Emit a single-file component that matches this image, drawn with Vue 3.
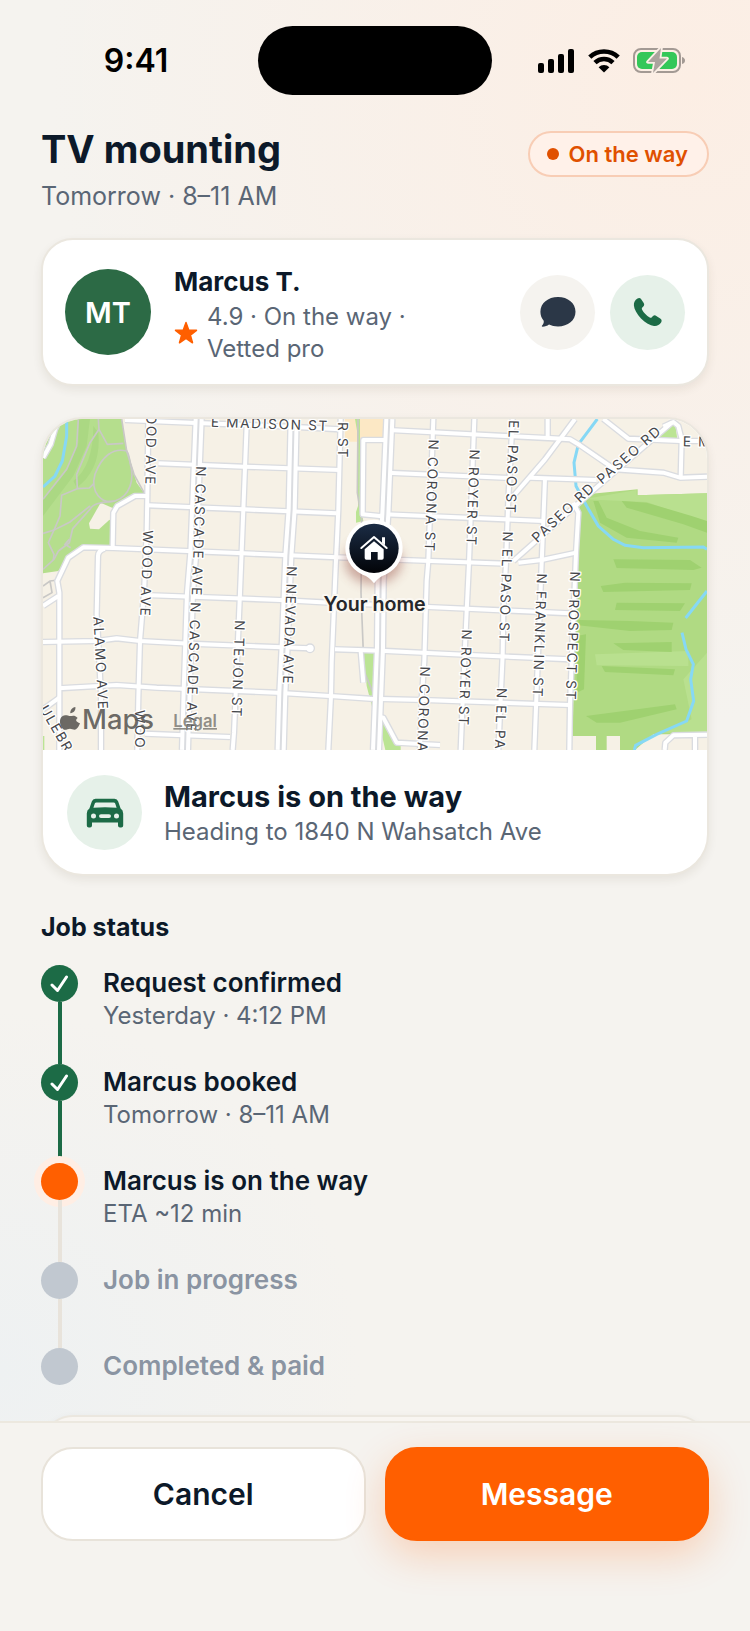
<script setup>
const parkPaths = [
  'M145 39 L140 120 L110 190 L39 280',
  'M205 39 L207 70 L232 115 L280 112',
  'M207 70 L180 110 L140 205 L142 248 L95 268 L90 330 L72 372 L39 382',
  'M142 248 L178 246 L192 232',
  'M290 135 C250 125 215 150 195 205 C180 260 215 295 255 285 C300 270 315 220 300 170 C298 150 295 142 290 135',
  'M255 285 C215 290 190 290 180 310 L128 368 L118 410 L85 435 L72 460 L39 490',
  'M180 300 L120 348 L72 372 L55 410 L72 445 L70 462',
  'M275 39 L290 135 L312 205 L345 265',
  'M118 400 L105 415 L122 425',
  'M39 540 L60 525 L85 522 M60 525 L66 560 L39 575'
]

const roads = [
  'M285 42 L480 50 L780 62 L930 70',
  'M385 172 L640 182 L930 192',
  'M352 298 L640 310 L920 322',
  'M88 1032 L88 560 L82 525 L115 455 L160 424 L250 426 L640 442 L920 454 L1120 462 L1430 473',
  'M355 39 L352 270 L350 380 L342 560 L330 705 L325 875 L322 1032',
  'M352 270 L315 270 L262 300 L250 320 L248 424',
  'M225 428 Q205 432 204 450 L200 625 L205 705 L213 870 L213 1032',
  'M342 567 L750 582 L900 590 L1195 603 L1620 622',
  'M39 708 L200 705 L260 697 L330 705 L480 713 L840 727',
  'M915 730 L1050 734 L1320 747 L1620 760',
  'M85 847 L260 837 L380 845 L740 860 L900 870 L1020 878 L1180 882 L1620 897',
  'M345 983 L600 993',
  'M650 58 L640 310 L630 560 L612 980 L608 1032',
  'M932 39 L925 310 L915 530 L905 770 L903 870 L895 1032',
  'M1065 102 L1000 102 L998 325 L1050 330 L1065 325 L1540 345',
  'M992 735 L1000 830',
  'M1035 930 L1060 935 L1100 1010 L1230 1017',
  'M1210 39 L1195 465 L1190 525 L1183 765 L1175 880 L1170 1032',
  'M1333 39 L1317 470 L1310 615 L1303 765 L1292 1032',
  'M1448 39 L1435 280 L1428 470 L1420 620 L1418 745 L1405 1032',
  'M1545 218 L1535 470 L1525 725 L1513 1032',
  'M1553 39 L1553 92',
  'M1618 1032 L1620 895 L1638 440 L1645 320 L1630 290',
  'M1075 72 L1570 97 L1620 100 L1650 118 L1755 190 L1900 200 L1950 215 L2031 212',
  'M1070 200 L1440 216 M1500 215 L1700 222',
  'M1635 39 L1545 160 L1450 270',
  'M1925 50 L1670 270 L1450 465',
  'M1900 62 L1930 48 L1945 60 L1955 100 L1952 215',
  'M1720 39 L1795 98 L1950 105 L2031 105',
  'M1465 470 L1535 462 L1638 440',
  'M88 875 L39 910 M39 600 L85 570',
  'M39 155 L62 115 L75 70 L90 39',
  'M2031 986 L1930 988 L1906 1010 L1904 1032 M1995 988 L1995 1032'
]

const avenues = [
  'M506 39 L490 440 L480 560 L470 855 L465 1032',
  'M791 39 L785 310 L775 450 L765 700 L757 860 L752 1032',
  'M1078 39 L1066 325 L1052 525 L1050 725 L1038 1032'
]

const fairways = [
  'M1775 285 L1850 290 L1985 330 L2031 345 L2031 380 L1960 355 L1790 305 Z',
  'M1690 285 L1705 285 L1730 335 L1830 375 L1945 395 L1940 410 L1790 395 L1710 350 Z',
  'M1750 460 L1980 462 L2015 485 L1990 492 L1760 486 Z',
  'M1712 540 L1785 530 L1985 532 L1980 552 L1720 558 Z',
  'M1760 590 L1965 592 L1950 615 L1755 612 Z',
  'M1645 642 L1800 645 L1930 650 L1925 672 L1800 675 L1645 658 Z',
  'M1750 712 L1925 708 L1925 738 L1780 732 Z',
  'M1715 780 L1935 790 L1930 808 L1725 798 Z',
  'M1640 690 L1668 685 L1662 850 L1640 860 Z',
  'M1668 930 L1935 895 L1940 910 L1770 950 L1700 950 Z'
]

const labels = [
  { text: 'OOD AVE', x: 346, y: 240, turn: 91, anchor: 'end' },
  { text: 'N CASCADE AVE', x: 499, y: 180, turn: 92 },
  { text: 'WOOD AVE', x: 340, y: 372, turn: 92 },
  { text: 'N NEVADA AVE', x: 771, y: 480, turn: 92 },
  { text: 'N CASCADE AVE', x: 482, y: 588, turn: 92 },
  { text: 'ALAMO AVE', x: 190, y: 632, turn: 87 },
  { text: 'N TEJON ST', x: 615, y: 642, turn: 92 },
  { text: 'WOO', x: 315, y: 912, turn: 90 },
  { text: 'ULEBR', x: 28, y: 908, turn: 60 },
  { text: 'E MADISON ST', x: 542, y: 62, turn: 2 },
  { text: 'R ST', x: 924, y: 48, turn: 90 },
  { text: 'N CORONA ST', x: 1196, y: 100, turn: 92 },
  { text: 'N ROYER ST', x: 1319, y: 130, turn: 92 },
  { text: 'EL PASO ST', x: 1437, y: 42, turn: 92 },
  { text: 'N EL PASO ST', x: 1419, y: 376, turn: 92 },
  { text: 'PASEO RD', x: 1522, y: 412, turn: -43 },
  { text: 'PASEO RD', x: 1716, y: 236, turn: -41 },
  { text: 'E M', x: 1958, y: 121, turn: 1 },
  { text: 'N FRANKLIN ST', x: 1521, y: 502, turn: 92 },
  { text: 'N PROSPECT ST', x: 1621, y: 496, turn: 92 },
  { text: 'N ROYER ST', x: 1296, y: 670, turn: 92 },
  { text: 'N CORONA', x: 1171, y: 781, turn: 92 },
  { text: 'N EL PA', x: 1401, y: 845, turn: 92 }
]

const steps = [
  { title: 'Request confirmed', note: 'Yesterday · 4:12 PM', state: 'done' },
  { title: 'Marcus booked', note: 'Tomorrow · 8–11 AM', state: 'done' },
  { title: 'Marcus is on the way', note: 'ETA ~12 min', state: 'active' },
  { title: 'Job in progress', note: '', state: 'todo' },
  { title: 'Completed & paid', note: '', state: 'todo' }
]
</script>

<template>
  <div class="screen">
    <div class="content">
      <div class="status-bar">
        <span class="time">9:41</span>
        <span class="island"></span>
        <span class="indicators">
          <svg width="37" height="24" viewBox="0 0 37 24">
            <rect x="0" y="14" width="6" height="10" rx="2" />
            <rect x="10" y="10" width="6" height="14" rx="2" />
            <rect x="20" y="5" width="6" height="19" rx="2" />
            <rect x="30" y="0" width="6" height="24" rx="2" />
          </svg>
          <svg width="32" height="24" viewBox="0 0 32 24">
            <g fill="none" stroke="#000" stroke-width="4.6">
              <path d="M1.8 8.2 A20.5 20.5 0 0 1 30.2 8.2" />
              <path d="M7 13.6 A13 13 0 0 1 25 13.6" />
            </g>
            <path d="M16 23.5 L10.6 18.2 A7.6 7.6 0 0 1 21.4 18.2 Z" />
          </svg>
          <svg width="52" height="26" viewBox="0 0 52 26">
            <rect x="1" y="1" width="46" height="23" rx="7" fill="none" stroke="#a39a94" stroke-width="2" />
            <path d="M49 9 Q52 10 52 12.500 Q52 15 49 16 Z" fill="#a39a94" />
            <rect x="4" y="4" width="40" height="17" rx="5" fill="#34c759" />
            <path d="M28 0 L15 14 H22 L20 25 L34 10.500 H26.500 Z" fill="#aba39e" stroke="#fbefe6" stroke-width="3.600" paint-order="stroke" stroke-linejoin="round" />
          </svg>
        </span>
      </div>

      <main class="main">
        <header class="heading">
          <div>
            <h1>TV mounting</h1>
            <p>Tomorrow · 8–11 AM</p>
          </div>
          <span class="badge"><i></i>On the way</span>
        </header>

        <section class="card pro">
          <span class="avatar">MT</span>
          <div class="pro-text">
            <h2>Marcus T.</h2>
            <div class="meta">
              <svg width="24" height="24" viewBox="0 0 24 24">
                <path d="M12 1.500 L14.700 9 L22.500 9.300 L16.400 14.100 L18.500 21.800 L12 17.400 L5.500 21.800 L7.600 14.100 L1.500 9.300 L9.300 9 Z" fill="#ff5f00" stroke="#ff5f00" stroke-width="1.500" stroke-linejoin="round" />
              </svg>
              <p>4.9 · On the way ·<br />Vetted pro</p>
            </div>
          </div>
          <button class="round neutral" type="button" aria-label="Message Marcus">
            <svg width="36" height="30" viewBox="0 0 36 30">
              <path d="M18 0 C28 0 35.500 6.200 35.500 14.700 C35.500 23.200 28 29.400 18 29.400 C14.600 29.400 11.600 28.800 9 27.500 C7.300 28.900 5 29.700 2.600 29.700 C1.600 29.700 1.600 28.900 2.300 28.200 C3.600 26.900 4 25.300 3.700 23.700 C1.600 21.300 0.400 18.200 0.400 14.700 C0.400 6.200 8 0 18 0 Z" fill="#2b3747" />
            </svg>
          </button>
          <button class="round mint" type="button" aria-label="Call Marcus">
            <svg width="30" height="30" viewBox="0 0 30 30">
              <path d="M4.500 1.600 C6 0.600 7.300 1 8.200 2.300 L10.700 6 C11.500 7.300 11.300 8.400 10.300 9.500 L9.300 10.600 C8.700 11.300 8.700 11.900 9.100 12.700 C10.600 15.500 13.700 18.700 16.700 20.500 C17.500 21 18.200 20.900 18.800 20.300 L20 19.100 C21 18.200 22.100 18.100 23.300 18.900 L27.200 21.600 C28.700 22.600 29.100 24 28.100 25.500 C26.400 28.100 24 29.200 21 28.900 C17.300 28.500 12.400 25.800 8 21.400 C3.700 17 1.200 12.200 0.900 8.600 C0.700 5.600 1.900 3.200 4.500 1.600 Z" fill="#1c6b46" />
            </svg>
          </button>
        </section>

        <section class="card trip">
          <svg class="map" viewBox="39 39 1992 993" role="img" aria-label="Map around your home">
            <defs>
              <linearGradient id="pin" x1="0" y1="0" x2="0" y2="1">
                <stop offset="0" stop-color="#1b2c45" />
                <stop offset="1" stop-color="#020408" />
              </linearGradient>
              <filter id="soft" x="-50%" y="-50%" width="200%" height="200%">
                <feGaussianBlur stdDeviation="16" />
              </filter>
            </defs>
            <rect x="39" y="39" width="1992" height="993" fill="#f6f1e6" />
            <path d="M39 39 H275 L285 110 L320 230 L345 265 L310 270 L262 300 L248 330 V424 H155 L115 455 L85 495 L39 502 Z" fill="#b5de8d" />
            <path d="M39 280 L110 190 L145 110 L145 39 H180 L170 120 L130 210 L39 330 Z M130 225 Q190 180 190 60 L205 80 Q215 190 140 245 Z" fill="#abd883" />
            <path d="M212 290 L248 306 L240 340 L207 370 L180 368 L177 352 Z" fill="#f6f1e6" />
            <path d="M945 39 H1062 V107 H945 Z" fill="#fce8c5" />
            <path d="M975 39 H990 V290 L1000 345 L978 350 V318 L984 300 L982 80 Z M1000 740 H1040 V880 L1028 910 L1010 840 Z M1050 940 L1062 945 L1112 1020 V1032 H1066 L1054 980 Z M39 990 H43 V1032 H39 Z M1890 75 L1935 50 L1942 100 H1890 Z" fill="#bbe494" />
            <path d="M1640 310 L1670 265 L1823 250 V268 L2031 262 V985 H1930 L1870 985 L1815 1032 H1770 V990 H1730 V1032 H1698 V990 H1628 Z" fill="#b0da83" />
            <path d="M1660 280 L1820 252 V268 L2031 262 V350 L1850 288 Z M1695 745 L1975 735 L1975 780 L1700 778 Z M1960 820 L2031 740 V980 H1900 L1985 940 Z" fill="#b9e08f" />
            <path v-for="d in fairways" :key="d" :d="d" fill="#9fd170" />
            <g fill="none" stroke="#c9c8c6" stroke-width="5">
              <path v-for="d in parkPaths" :key="d" :d="d" />
              <path d="M984 39 L982 260 L995 340 L993 560 L1000 740 L1004 800 L1030 862" />
            </g>
            <g fill="none" stroke="#86d8f5" stroke-width="9">
              <path d="M110 39 V90 L97 165 L75 210 L39 243" />
              <path d="M1702 39 L1645 115 L1632 170 L1638 240 L1670 300 L1705 360 L1750 400 L1785 418 L1840 425 L2020 423 L2031 430" />
              <path d="M2031 555 L1967 636 M1956 680 L1968 730 L1990 775 L1982 820 L1991 885 L1970 945 L1880 985 L1817 1018 L1813 1032" />
            </g>
            <g class="casing">
              <path v-for="d in roads" :key="d" :d="d" />
            </g>
            <circle cx="840" cy="727" r="15" fill="#d9dbdf" />
            <g class="avenue-casing">
              <path v-for="d in avenues" :key="d" :d="d" />
            </g>
            <g class="road">
              <path v-for="d in roads" :key="d" :d="d" />
            </g>
            <circle cx="840" cy="727" r="11" fill="#fff" />
            <g class="avenue">
              <path v-for="d in avenues" :key="d" :d="d" />
            </g>
            <g class="median">
              <path v-for="d in avenues" :key="d" :d="d" />
            </g>
            <g class="street">
              <text v-for="(l, i) in labels" :key="i" :text-anchor="l.anchor || 'start'" :transform="`translate(${l.x} ${l.y}) rotate(${l.turn})`">{{ l.text }}</text>
            </g>
            <g fill="#5f5d59" fill-opacity=".92">
              <path d="M136 903 C126 904 120 914 121 922 C131 921 138 912 136 903 Z M143 936 C135 926 126 930 121 930 C115 930 105 925 98 930 C84 938 90 965 102 971 C108 973 114 968 120 968 C126 968 132 973 138 970 C144 966 148 958 150 952 C138 947 135 942 143 936 Z" />
              <text class="maps-word" x="156" y="970">Maps</text>
              <a href="#legal"><text class="legal" x="430" y="963">Legal</text></a>
            </g>
            <ellipse cx="1030" cy="465" rx="86" ry="70" fill="#8a3a30" opacity=".4" filter="url(#soft)" />
            <path d="M1032 341 A86 86 0 0 1 1066 506 Q1046 512 1032 532 Q1018 512 998 506 A86 86 0 0 1 1032 341 Z" fill="#fff" />
            <circle cx="1032" cy="427" r="74" fill="url(#pin)" />
            <path d="M994 426 L1032 393 L1070 426" fill="none" stroke="#fff" stroke-width="6" stroke-linecap="round" stroke-linejoin="round" />
            <path d="M1056 394 H1065 V418 L1056 410 Z" fill="#fff" />
            <path d="M1004 430 L1032 406 L1061 430 V456 Q1061 461 1056 461 H1043 V438 H1023 V461 H1009 Q1004 461 1004 456 Z" fill="#fff" />
            <text class="home" x="1034" y="615" text-anchor="middle">Your home</text>
          </svg>
          <div class="trip-info">
            <span class="round mint">
              <svg width="38" height="30" viewBox="0 0 38 30">
                <path fill-rule="evenodd" fill="#1c6b46" d="M9.500 0.800 H28.500 Q31.300 0.800 32.200 3.400 L34.600 10.600 Q37.200 12 37.200 15.500 V27.500 Q37.200 29.500 35.200 29.500 H34 Q32 29.500 32 27.500 V24.600 H6 V27.500 Q6 29.500 4 29.500 H2.800 Q0.800 29.500 0.800 27.500 V15.500 Q0.800 12 3.400 10.600 L5.800 3.400 Q6.700 0.800 9.500 0.800 Z M10.400 4.400 Q9.200 4.400 8.800 5.600 L7.400 9.800 Q19 8.600 30.600 9.800 L29.200 5.600 Q28.800 4.400 27.600 4.400 Z M7.500 15.600 A2.500 2.500 0 1 0 7.500 20.600 A2.500 2.500 0 1 0 7.500 15.600 Z M30.500 15.600 A2.500 2.500 0 1 0 30.500 20.600 A2.500 2.500 0 1 0 30.500 15.600 Z M15 16.200 H23 Q25 16.200 25 18.100 Q25 20 23 20 H15 Q13 20 13 18.100 Q13 16.200 15 16.200 Z" />
              </svg>
            </span>
            <div>
              <h2>Marcus is on the way</h2>
              <p>Heading to 1840 N Wahsatch Ave</p>
            </div>
          </div>
        </section>

        <h3 class="section-title">Job status</h3>
        <ol class="timeline">
          <li v-for="s in steps" :key="s.title" :class="s.state">
            <span class="dot">
              <svg v-if="s.state === 'done'" width="19" height="18" viewBox="0 0 19 18">
                <path d="M2 10 L7.500 15.500 L16.500 2" fill="none" stroke="#fff" stroke-width="3" stroke-linecap="round" stroke-linejoin="round" />
              </svg>
            </span>
            <div>
              <h4>{{ s.title }}</h4>
              <p v-if="s.note">{{ s.note }}</p>
            </div>
          </li>
        </ol>
        <section class="card next"></section>
      </main>
    </div>

    <footer class="actions">
      <button class="cancel" type="button">Cancel</button>
      <button class="primary" type="button">Message</button>
    </footer>
  </div>
</template>

<style>
body {
  margin: 0;
}
</style>

<style scoped>
.screen {
  height: 100vh;
  display: flex;
  flex-direction: column;
  font-family: Inter, "Liberation Sans", sans-serif;
  color: #0c1929;
  background:
    radial-gradient(circle at 92% 5%, #fceee4 0, rgba(252, 238, 228, 0) 640px),
    radial-gradient(circle at 0 84%, #eef1f2 0, rgba(238, 241, 242, 0) 360px),
    #f5f3ef;
}
h1, h2, h3, h4, p, ol {
  margin: 0;
  padding: 0;
}
svg {
  display: block;
  flex: none;
}
.content {
  flex: 1;
  min-height: 0;
  overflow-y: auto;
  scrollbar-width: none;
}
.status-bar {
  display: grid;
  grid-template-columns: 1fr 234px 1fr;
  align-items: center;
  padding-top: 26px;
}
.time {
  font-size: 32px;
  font-weight: 600;
  text-align: center;
  color: #000;
  padding-left: 14px;
}
.island {
  height: 69px;
  border-radius: 35px;
  background: #000;
}
.indicators {
  display: flex;
  justify-content: center;
  align-items: center;
  gap: 13px;
  padding-right: 20px;
}
.main {
  padding: 28px 41px 0;
}
.heading {
  display: flex;
  justify-content: space-between;
  align-items: flex-start;
}
h1 {
  font-size: 38px;
  line-height: 52px;
  font-weight: 700;
}
p {
  font-size: 24px;
  line-height: 32px;
  color: #5a6675;
}
.heading p {
  font-size: 25px;
  line-height: 42px;
}
.badge {
  display: flex;
  align-items: center;
  gap: 10px;
  box-sizing: border-box;
  height: 46px;
  margin-top: 8px;
  padding: 0 19px 0 17px;
  border: 2px solid #f8cdb5;
  border-radius: 23px;
  background: #fff1e9;
  color: #e05000;
  font-size: 22px;
  font-weight: 600;
}
.badge i {
  width: 12px;
  height: 12px;
  border-radius: 50%;
  background: #e05000;
}
.card {
  background: #fff;
  border: 2px solid #ebe7df;
  box-shadow: 0 4px 10px rgba(60, 50, 30, 0.08);
}
.pro {
  display: flex;
  align-items: center;
  gap: 15px;
  margin-top: 21px;
  padding: 19px 22px;
  border-radius: 32px;
}
.avatar {
  width: 86px;
  height: 86px;
  flex: none;
  display: grid;
  place-items: center;
  border-radius: 50%;
  background: #2c6a45;
  color: #fff;
  font-size: 29px;
  font-weight: 600;
}
.pro-text {
  flex: 1;
  padding: 4px 0 0 8px;
}
.pro-text h2 {
  font-size: 26px;
  line-height: 38px;
  font-weight: 700;
}
.meta {
  display: flex;
  align-items: center;
  gap: 9px;
}
.round {
  width: 75px;
  height: 75px;
  flex: none;
  display: grid;
  place-items: center;
  padding: 0;
  border: 0;
  border-radius: 50%;
}
.neutral {
  background: #f5f3ef;
}
.mint {
  background: #e6f1e9;
}
.trip {
  margin-top: 31px;
  border-radius: 42px;
  overflow: hidden;
}
.map {
  width: 100%;
  height: auto;
}
.casing path, .road path, .avenue-casing path, .avenue path, .median path {
  fill: none;
  stroke-linejoin: round;
}
.casing path {
  stroke: #dadce0;
  stroke-width: 20;
}
.road path {
  stroke: #fff;
  stroke-width: 12;
}
.avenue-casing path {
  stroke: #dadce0;
  stroke-width: 38;
}
.avenue path {
  stroke: #fff;
  stroke-width: 30;
}
.median path {
  stroke: #dadce0;
  stroke-width: 6;
}
.street text {
  font-size: 41px;
  letter-spacing: 5px;
  fill: #45464a;
  stroke: #fff;
  stroke-width: 8px;
  stroke-linejoin: round;
  paint-order: stroke;
}
.maps-word {
  font-size: 82px;
  font-weight: 500;
}
.legal {
  font-size: 50px;
  font-weight: 600;
  fill: #85837d;
  text-decoration: underline;
}
.home {
  font-size: 59px;
  font-weight: 600;
  fill: #26272b;
  stroke: #fbf8f2;
  stroke-width: 12px;
  stroke-linejoin: round;
  paint-order: stroke;
}
.trip-info {
  display: flex;
  align-items: center;
  gap: 22px;
  padding: 25px 24px 24px;
}
.trip-info h2 {
  font-size: 29px;
  line-height: 38px;
  font-weight: 700;
}
.section-title {
  margin-top: 33px;
  font-size: 25px;
  line-height: 36px;
  font-weight: 700;
}
.timeline {
  list-style: none;
  margin-top: 20px;
}
.timeline li {
  position: relative;
  display: flex;
  gap: 25px;
  min-height: 86px;
}
.timeline li:has(p) {
  min-height: 99px;
}
.timeline li:last-child {
  min-height: 67px;
}
.timeline li:not(:last-child)::before {
  content: "";
  position: absolute;
  left: 17px;
  top: 37px;
  bottom: 0;
  width: 4px;
  background: #e8e3db;
  z-index: 1;
}
.timeline li.done:not(:last-child)::before {
  background: #1c6b46;
  z-index: 0;
}
.dot {
  width: 37px;
  height: 37px;
  flex: none;
  display: grid;
  place-items: center;
  border-radius: 50%;
  background: #c1c8d0;
}
.done .dot {
  background: #1c6b46;
}
.active .dot {
  position: relative;
  background: #ff5f00;
  box-shadow: 0 0 0 7px #ffeee4;
}
h4 {
  font-size: 26px;
  line-height: 36px;
  font-weight: 600;
}
.timeline p {
  line-height: 30px;
}
.todo h4 {
  color: #8a94a2;
}
.next {
  height: 120px;
  border-radius: 32px;
  background: #f8f5f1;
}
.actions {
  display: flex;
  gap: 19px;
  padding: 24px 41px 90px;
  border-top: 2px solid #ece8df;
  background: #f5f3ef;
}
.actions button {
  flex: 1 1 0;
  height: 94px;
  padding: 0;
  border: 2px solid;
  box-sizing: border-box;
  border-radius: 32px;
  font-family: inherit;
  font-size: 30px;
  font-weight: 600;
}
.actions .cancel {
  border-color: #e8e3da;
  background: #fff;
  color: #0c1929;
}
.actions .primary {
  border-color: #ff5f00;
  background: #ff5f00;
  color: #fff;
  box-shadow: 0 14px 40px rgba(255, 95, 0, 0.24);
}
</style>
